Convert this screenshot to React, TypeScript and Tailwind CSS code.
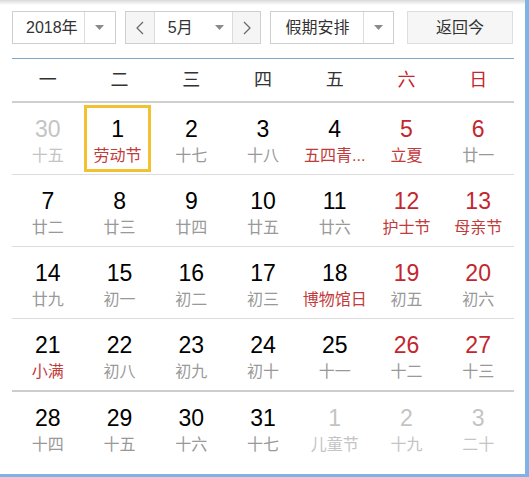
import React from 'react';

type Day = {
  n: number;
  sub: string;
  other?: boolean; // outside current month
  holiday?: boolean; // red sub text
  today?: boolean;
};

const FONT = { fontFamily: '"Liberation Sans", "Noto Sans CJK SC", sans-serif' };

const weeks: Day[][] = [
  [
    { n: 30, sub: '十五', other: true },
    { n: 1, sub: '劳动节', holiday: true, today: true },
    { n: 2, sub: '十七' },
    { n: 3, sub: '十八' },
    { n: 4, sub: '五四青...', holiday: true },
    { n: 5, sub: '立夏', holiday: true },
    { n: 6, sub: '廿一' },
  ],
  [
    { n: 7, sub: '廿二' },
    { n: 8, sub: '廿三' },
    { n: 9, sub: '廿四' },
    { n: 10, sub: '廿五' },
    { n: 11, sub: '廿六' },
    { n: 12, sub: '护士节', holiday: true },
    { n: 13, sub: '母亲节', holiday: true },
  ],
  [
    { n: 14, sub: '廿九' },
    { n: 15, sub: '初一' },
    { n: 16, sub: '初二' },
    { n: 17, sub: '初三' },
    { n: 18, sub: '博物馆日', holiday: true },
    { n: 19, sub: '初五' },
    { n: 20, sub: '初六' },
  ],
  [
    { n: 21, sub: '小满', holiday: true },
    { n: 22, sub: '初八' },
    { n: 23, sub: '初九' },
    { n: 24, sub: '初十' },
    { n: 25, sub: '十一' },
    { n: 26, sub: '十二' },
    { n: 27, sub: '十三' },
  ],
  [
    { n: 28, sub: '十四' },
    { n: 29, sub: '十五' },
    { n: 30, sub: '十六' },
    { n: 31, sub: '十七' },
    { n: 1, sub: '儿童节', other: true },
    { n: 2, sub: '十九', other: true },
    { n: 3, sub: '二十', other: true },
  ],
];

const weekdays = ['一', '二', '三', '四', '五', '六', '日'];

function Caret() {
  return (
    <svg width="9" height="5" viewBox="0 0 9 5">
      <path d="M0 0 L9 0 L4.5 5 Z" fill="#8a8a8a" />
    </svg>
  );
}

function Chevron({ dir }: { dir: 'left' | 'right' }) {
  return (
    <svg width="8" height="14" viewBox="0 0 8 14">
      <path
        d={dir === 'left' ? 'M7 1 L1 7 L7 13' : 'M1 1 L7 7 L1 13'}
        fill="none"
        stroke="#666"
        strokeWidth="1.2"
      />
    </svg>
  );
}

function DayCell({ d, col }: { d: Day; col: number }) {
  const weekend = col >= 5;
  let numColor = 'text-black';
  if (d.other) numColor = 'text-[#c4c4c4]';
  else if (weekend) numColor = 'text-[#c4262e]';

  let subColor = 'text-[#999]';
  if (d.other) subColor = 'text-[#c4c4c4]';
  else if (d.holiday) subColor = 'text-[#c23b3b]';

  return (
    <div className="flex h-[71px] items-center justify-center">
      <div
        className={[
          'flex h-[67px] w-[67px] flex-col items-center justify-center pt-[4px]',
          d.today ? '-ml-[4px] border-[3px] border-[#f2c232]' : '',
        ].join(' ')}
      >
        <div className={`text-[23px] leading-[26px] ${numColor}`}>{d.n}</div>
        <div className={`mt-[3px] whitespace-nowrap text-[16px] leading-[21px] ${subColor}`}>{d.sub}</div>
      </div>
    </div>
  );
}

export default function App() {
  return (
    <div
      className="relative h-[477px] w-[529px] overflow-hidden border-r-[4px] border-b-[3px] border-[#7fb2e5] bg-white"
      style={FONT}
    >
      {/* top shade */}
      <div className="absolute left-0 right-0 top-0 h-[5px] bg-gradient-to-b from-[#d9d9d9] to-white" />

      <div className="relative px-[12px] pt-[11px]">
        {/* controls */}
        <div className="flex h-[33px] items-stretch text-[16px] text-[#333]">
          <div className="flex w-[104px] border border-[#cfcfcf] bg-white">
            <div className="flex w-[71px] items-center pl-[13px]">2018年</div>
            <div className="flex flex-1 items-center justify-center border-l border-[#dcdcdc]">
              <Caret />
            </div>
          </div>

          <div className="ml-[9px] flex w-[137px] border border-[#cfcfcf]">
            <div className="flex w-[28px] items-center justify-center bg-[#f5f5f5]">
              <Chevron dir="left" />
            </div>
            <div className="flex w-[79px] items-center border-x border-[#dcdcdc] bg-white pl-[13px]">
              <span>5月</span>
              <span className="ml-[22px] flex">
                <Caret />
              </span>
            </div>
            <div className="flex flex-1 items-center justify-center bg-[#f5f5f5]">
              <Chevron dir="right" />
            </div>
          </div>

          <div className="ml-[9px] flex w-[124px] border border-[#cfcfcf] bg-white">
            <div className="flex w-[92px] items-center justify-center">假期安排</div>
            <div className="flex flex-1 items-center justify-center border-l border-[#dcdcdc]">
              <Caret />
            </div>
          </div>

          <div className="ml-[13px] flex w-[106px] items-center justify-center border border-[#dedede] bg-[#f6f6f6]">
            返回今
          </div>
        </div>

        {/* calendar */}
        <div className="mt-[14px] w-[502px] border-t border-[#7ea8c9]">
          <div className="grid h-[44px] grid-cols-7 border-b-2 border-[#cfcfcf] text-[18px]">
            {weekdays.map((w, i) => (
              <div
                key={w}
                className={`flex items-center justify-center ${i >= 5 ? 'text-[#c4262e]' : 'text-[#333]'}`}
              >
                {w}
              </div>
            ))}
          </div>

          {weeks.map((week, wi) => (
            <div
              key={wi}
              className={[
                'grid grid-cols-7',
                wi === 3 ? 'border-b-2 border-[#cdcdcd]' : wi < 3 ? 'border-b border-[#dcdcdc]' : '',
              ].join(' ')}
            >
              {week.map((d, ci) => (
                <DayCell key={ci} d={d} col={ci} />
              ))}
            </div>
          ))}
        </div>
      </div>
    </div>
  );
}
